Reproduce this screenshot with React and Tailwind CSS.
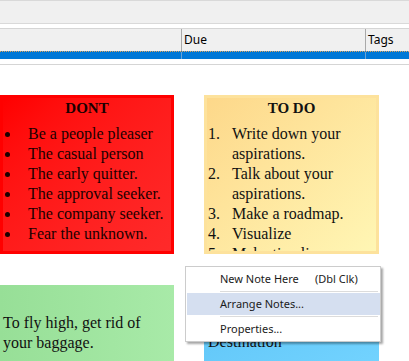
const serif = "font-['Liberation_Serif','Times_New_Roman',serif]";
const ui = "font-['Noto_Sans','Open_Sans',sans-serif]";

const dont = [
  "Be a people pleaser",
  "The casual person",
  "The early quitter.",
  "The approval seeker.",
  "The company seeker.",
  "Fear the unknown.",
];

const todo = [
  ["Write down your", "aspirations."],
  ["Talk about your", "aspirations."],
  ["Make a roadmap."],
  ["Visualize"],
  ["Make timelines"],
];

function ListHeader() {
  return (
    <div className="flex flex-col">
      <div className="h-[24px] border-y border-[#d9d9d9] bg-[#f0f0f0]" />
      <div className="mt-[4px] flex h-[23px] border-t border-[#d5d5d5] bg-[#f0f0f0] text-[12px] text-black">
        <div className="w-[181px]" />
        <div className={`flex w-[184px] items-center border-l border-[#a9a9a9] pl-[2px] ${ui}`}>Due</div>
        <div className={`flex flex-1 items-center border-l border-[#a9a9a9] pl-[2px] ${ui}`}>Tags</div>
      </div>
      <div className="flex h-[8px] border-t border-dotted border-[#e2a35a] bg-[#0078d7]">
        <div className="w-[181px]" />
        <div className="w-[184px] border-l border-[#6aa3d6]" />
        <div className="flex-1 border-l border-[#6aa3d6]" />
      </div>
      <div className="mt-[5px] h-px bg-[#d5d5d5]" />
    </div>
  );
}

function DontNote() {
  return (
    <div className="absolute left-0 top-[95px] h-[159px] w-[174px] border-[3px] border-[#ff0000] bg-linear-to-br from-[#ff0000] to-[#ff2a2a]">
      <div className={`${serif} text-[16px] leading-[20px] text-[#1a0000]`}>
        <div className="text-center text-[15px] font-bold leading-[20px]">DONT</div>
        <ul className="mt-[6px]">
          {dont.map((t) => (
            <li key={t} className="flex items-center whitespace-nowrap">
              <span className="ml-[2px] mr-[18px] h-[5px] w-[5px] rounded-full bg-[#1a0000]" />
              {t}
            </li>
          ))}
        </ul>
      </div>
    </div>
  );
}

function TodoNote() {
  return (
    <div className="absolute left-[204px] top-[95px] h-[159px] w-[175px] border-[3px] border-[#fde29c] bg-linear-to-br from-[#fdd88a] to-[#fff6b4]">
      <div className={`h-full overflow-hidden ${serif} text-[16px] leading-[20px] text-[#111]`}>
        <div className="text-center text-[15px] font-bold leading-[20px]">TO DO</div>
        <ol className="mt-[6px]">
          {todo.map((lines, i) => (
            <li key={i} className="flex">
              <span className="ml-[1px] w-[24px] shrink-0">{i + 1}.</span>
              <span className="flex flex-col whitespace-nowrap">
                {lines.map((l) => (
                  <span key={l}>{l}</span>
                ))}
              </span>
            </li>
          ))}
        </ol>
      </div>
    </div>
  );
}

function ContextMenu() {
  return (
    <div
      className={`absolute left-[185px] top-[266px] w-[196px] border border-[#cccccc] bg-white py-0 pl-[1px] text-[11px] text-[#1b1b1b] shadow-[2px_2px_2px_rgba(0,0,0,0.35)] ${ui}`}
    >
      <div className="flex h-[24px] items-center pl-[33px]">
        <span className="w-[95px]">New Note Here</span>
        <span>(Dbl Clk)</span>
      </div>
      <div className="ml-[33px] mr-[2px] h-px bg-[#dcdcdc]" />
      <div className="my-[1px] flex h-[22px] items-center bg-[#d5dff0] pl-[33px]">Arrange Notes...</div>
      <div className="ml-[33px] mr-[2px] h-px bg-[#dcdcdc]" />
      <div className="flex h-[24px] items-center pl-[33px]">Properties...</div>
    </div>
  );
}

export default function App() {
  return (
    <div className="relative h-[361px] w-[409px] overflow-hidden bg-white">
      <ListHeader />
      <DontNote />
      <TodoNote />
      <div className="absolute left-0 top-[285px] h-[90px] w-[174px] bg-linear-to-r from-[#97df97] to-[#a8eaa8] pl-[3px] pt-[28px]">
        <p className={`${serif} text-[16px] leading-[20px] text-[#111]`}>
          To fly high, get rid of
          <br />
          your baggage.
        </p>
      </div>
      <div className="absolute left-[204px] top-[285px] h-[90px] w-[175px] bg-linear-to-br from-[#5cc3f6] to-[#74d4ff] pl-[4px] pt-[47px]">
        <p className={`${serif} text-[16px] leading-[20px] text-[#111]`}>Destination</p>
      </div>
      <ContextMenu />
    </div>
  );
}
